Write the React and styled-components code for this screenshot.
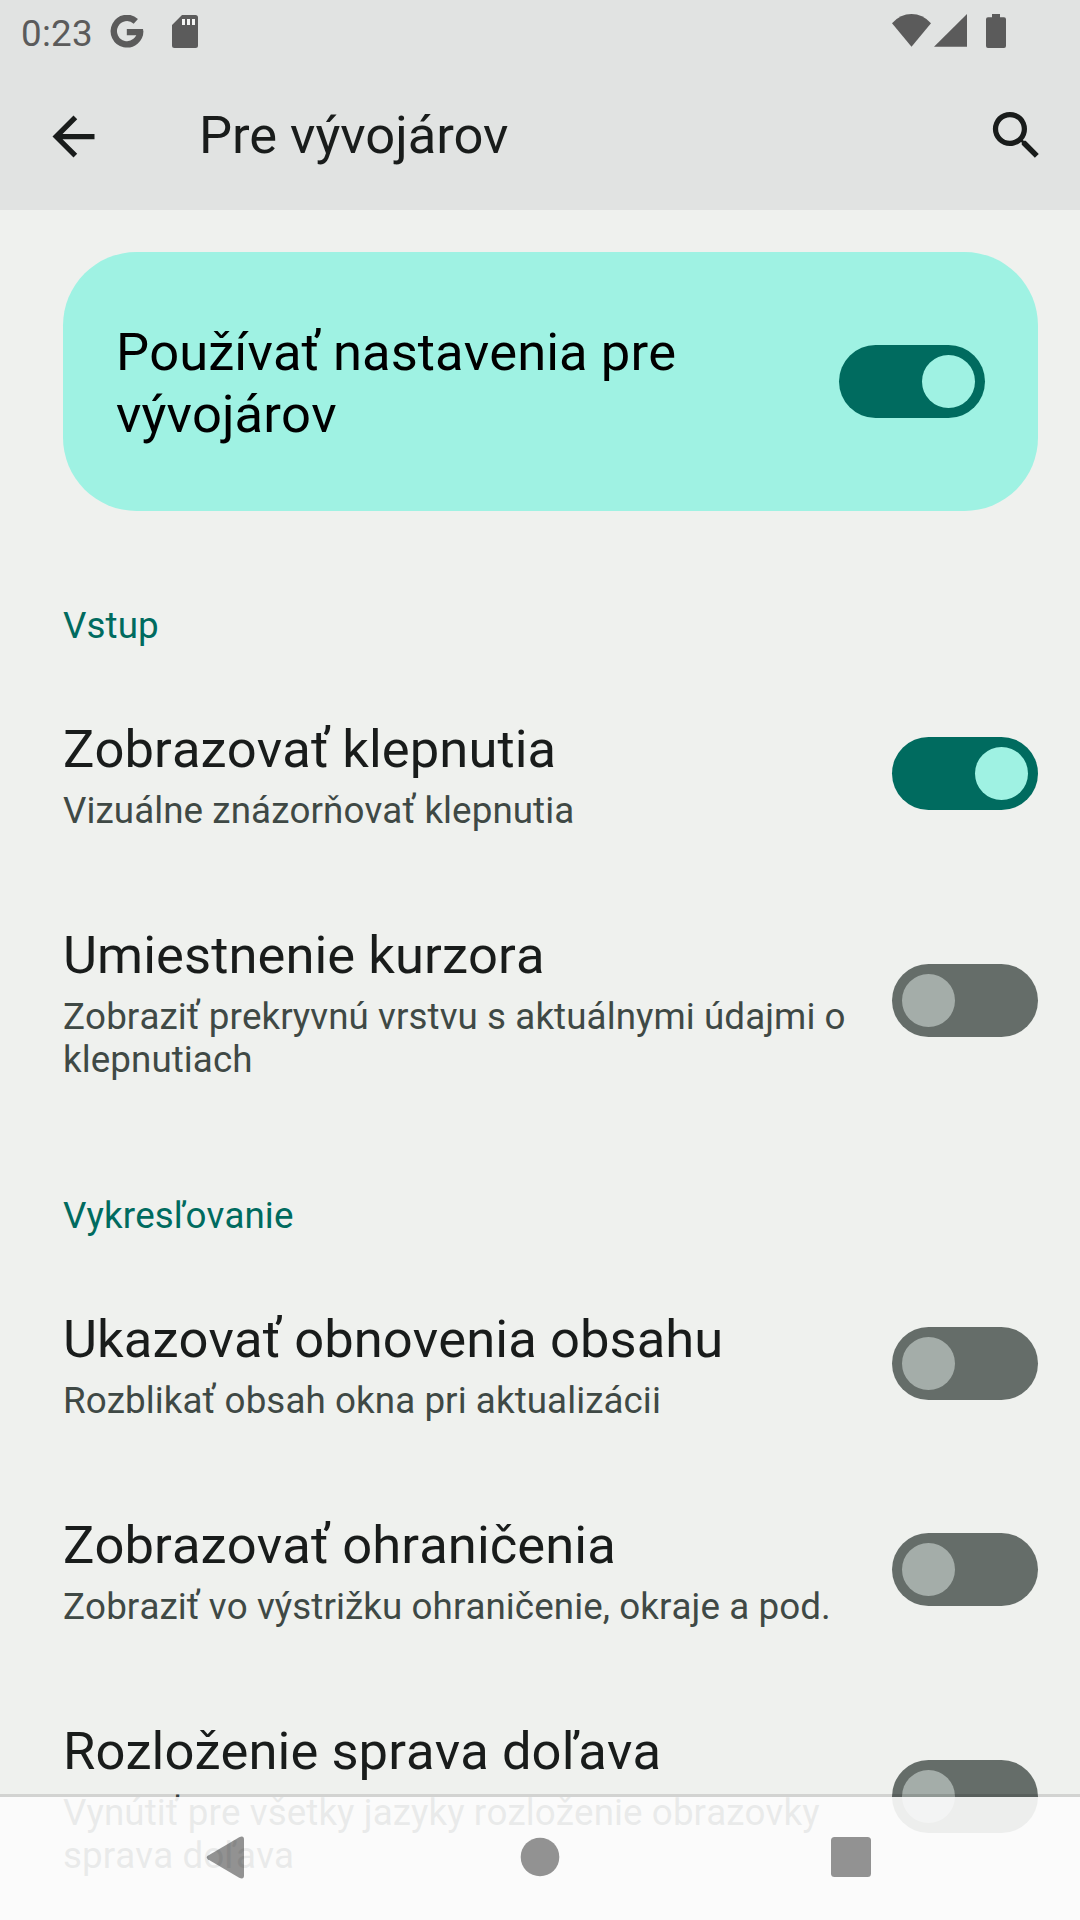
import React from "react";
import styled, { createGlobalStyle } from "styled-components";

const GlobalStyle = createGlobalStyle`
  *, *::before, *::after { box-sizing: border-box; }
  body {
    margin: 0;
    background: #eff1ee;
    font-family: Roboto, "Noto Sans", sans-serif;
    font-kerning: none;
    letter-spacing: 0.08px;
    color: #191c1b;
  }
`;

const Screen = styled.div`
  position: relative;
  width: 1080px;
  height: 1920px;
  overflow: hidden;
  background: #eff1ee;
`;

const TopArea = styled.header`
  height: 210px;
  background: #e1e3e2;
`;

const StatusBar = styled.div`
  display: flex;
  align-items: flex-start;
  justify-content: space-between;
  height: 63px;
  padding: 0 74px 0 21px;
  color: #5b5b5b;
`;

const StatusGroup = styled.div`
  display: flex;
  padding-top: ${(p) => p.$top || 0}px;
`;

const Clock = styled.span`
  width: 89px;
  padding-top: 12px;
  font-size: 36.75px;
  letter-spacing: 0.25px;
  line-height: 43px;
`;

const StatusIcon = styled.svg`
  display: block;
  flex: none;
  margin-top: ${(p) => p.$top || 0}px;
  margin-left: ${(p) => p.$left || 0}px;
`;

const AppBar = styled.div`
  display: flex;
  align-items: flex-start;
  height: 147px;
  padding: 41px 32px 0 42px;
`;

const IconButton = styled.button`
  display: block;
  flex: none;
  width: 63px;
  height: 63px;
  margin: ${(p) => p.$top || 0}px 0 0;
  padding: 0;
  border: 0;
  background: none;
  color: #191c1b;

  svg {
    display: block;
    width: 63px;
    height: 63px;
    fill: currentColor;
  }
`;

const PageTitle = styled.h1`
  flex: 1;
  margin: 0 0 0 94px;
  font-size: 52.5px;
  font-weight: 400;
  font-kerning: normal;
  letter-spacing: -0.05px;
  line-height: 62px;
`;

const MainSwitchCard = styled.section`
  display: flex;
  align-items: center;
  justify-content: space-between;
  width: 975px;
  height: 259px;
  margin: 42px 0 24px 63px;
  padding: 0 53px;
  border-radius: 73.5px;
  background: #9ff2e3;
  color: #000;
`;

const CardText = styled.div`
  width: 600px;
  padding-top: 3px;
  font-size: 52.5px;
  line-height: 62px;
`;

const Category = styled.h2`
  height: 135px;
  margin: 0;
  padding: 69px 63px 0;
  color: #006b5f;
  font-size: 36.75px;
  font-weight: 400;
  line-height: 43px;
`;

const Row = styled.div`
  display: flex;
  align-items: center;
  justify-content: space-between;
  padding: 0 42px 0 63px;
`;

const RowText = styled.div`
  width: 800px;
  padding: 48px 0 44px;
`;

const RowTitle = styled.div`
  font-size: 52.5px;
  line-height: 62px;
`;

const RowSummary = styled.div`
  margin-top: 9px;
  color: #3f4945;
  font-size: 36.75px;
  line-height: 43px;
`;

const Track = styled.span`
  display: flex;
  flex: none;
  justify-content: ${(p) => (p.$on ? "flex-end" : "flex-start")};
  width: 146px;
  height: 73px;
  padding: 10px;
  border-radius: 37px;
  background: ${(p) => (p.$on ? "#006b5f" : "#656d69")};
`;

const Thumb = styled.span`
  width: 53px;
  height: 53px;
  border-radius: 50%;
  background: ${(p) => (p.$on ? "#9ff2e3" : "#a4ada9")};
`;

const NavBar = styled.nav`
  position: absolute;
  right: 0;
  bottom: 0;
  left: 0;
  display: flex;
  justify-content: space-between;
  height: 126px;
  padding: 39px 208px 0 206px;
  border-top: 3px solid rgba(0, 0, 0, 0.12);
  background: rgba(252, 252, 252, 0.9);
  background-clip: padding-box;
`;

const NavIcon = styled.svg`
  display: block;
  width: 42px;
  height: 44px;
  fill: rgba(0, 0, 0, 0.42);
`;

function Switch({ on }) {
  return (
    <Track $on={on} role="switch" aria-checked={!!on}>
      <Thumb $on={on} />
    </Track>
  );
}

function Preference({ title, summary, on }) {
  return (
    <Row>
      <RowText>
        <RowTitle>{title}</RowTitle>
        <RowSummary>{summary}</RowSummary>
      </RowText>
      <Switch on={on} />
    </Row>
  );
}

const sections = [
  {
    name: "Vstup",
    items: [
      { title: "Zobrazovať klepnutia", summary: "Vizuálne znázorňovať klepnutia", on: true },
      { title: "Umiestnenie kurzora", summary: "Zobraziť prekryvnú vrstvu s aktuálnymi údajmi o klepnutiach" },
    ],
  },
  {
    name: "Vykresľovanie",
    items: [
      { title: "Ukazovať obnovenia obsahu", summary: "Rozblikať obsah okna pri aktualizácii" },
      { title: "Zobrazovať ohraničenia", summary: "Zobraziť vo výstrižku ohraničenie, okraje a pod." },
      { title: "Rozloženie sprava doľava", summary: "Vynútiť pre všetky jazyky rozloženie obrazovky sprava doľava" },
    ],
  },
];

export default function App() {
  return (
    <>
      <GlobalStyle />
      <Screen>
        <TopArea>
          <StatusBar>
            <StatusGroup>
              <Clock>0:23</Clock>
              <StatusIcon $top={15} width="34" height="33" viewBox="0 0 34 33">
                <path
                  d="M25.8 6.3A13.2 13.2 0 1 0 30.2 15.6"
                  fill="none"
                  stroke="currentColor"
                  strokeWidth="6.4"
                />
                <path d="M16.8 14H33.1L32.4 20.3H16.8Z" fill="currentColor" />
              </StatusIcon>
              <StatusIcon $top={15} $left={28} width="26" height="33" viewBox="0 0 26 33">
                <path
                  d="M10 0H23.5A2.5 2.5 0 0 1 26 2.5V30.5A2.5 2.5 0 0 1 23.5 33H2.5A2.5 2.5 0 0 1 0 30.5V10Z"
                  fill="currentColor"
                />
                <path d="M10 4h3v6h-3zM15 4h3v6h-3zM20 4h3v6h-3z" fill="#f4f5f4" />
              </StatusIcon>
            </StatusGroup>
            <StatusGroup $top={14}>
              <StatusIcon width="39" height="33" viewBox="0 0 39 33">
                <path d="M0 9.2Q8.4 0 19.5 0T39 9.2L19.5 32.8Z" fill="currentColor" />
              </StatusIcon>
              <StatusIcon $left={3} width="33" height="33" viewBox="0 0 33 33">
                <path d="M0 32.8L33 0V32.8Z" fill="currentColor" />
              </StatusIcon>
              <StatusIcon $left={19} width="20" height="34" viewBox="0 0 20 34">
                <path
                  d="M6 0H14V3.3H18A2 2 0 0 1 20 5.3V32A2 2 0 0 1 18 34H2A2 2 0 0 1 0 32V5.3A2 2 0 0 1 2 3.3H6Z"
                  fill="currentColor"
                />
              </StatusIcon>
            </StatusGroup>
          </StatusBar>
          <AppBar>
            <IconButton $top={1} aria-label="Späť">
              <svg viewBox="0 0 24 24">
                <path d="M20 11H7.83l5.59-5.59L12 4l-8 8 8 8 1.41-1.41L7.83 13H20v-2z" />
              </svg>
            </IconButton>
            <PageTitle>Pre vývojárov</PageTitle>
            <IconButton aria-label="Hľadať">
              <svg viewBox="0 0 24 24">
                <path d="M15.5 14h-.79l-.28-.27A6.471 6.471 0 0 0 16 9.5 6.5 6.5 0 1 0 9.5 16c1.61 0 3.09-.59 4.23-1.57l.27.28v.79l5 4.99L20.49 19l-4.99-5zm-6 0C7.01 14 5 11.99 5 9.5S7.01 5 9.5 5 14 7.01 14 9.5 11.99 14 9.5 14z" />
              </svg>
            </IconButton>
          </AppBar>
        </TopArea>
        <main>
          <MainSwitchCard>
            <CardText>Používať nastavenia pre vývojárov</CardText>
            <Switch on />
          </MainSwitchCard>
          {sections.map((section) => (
            <section key={section.name}>
              <Category>{section.name}</Category>
              {section.items.map((item) => (
                <Preference key={item.title} {...item} />
              ))}
            </section>
          ))}
        </main>
        <NavBar>
          <NavIcon viewBox="0 0 42 44">
            <path d="M1.8 19.8L33.2 1.2Q38 -0.8 38 3.5V39.5Q38 43.8 33.2 41.8L1.8 23.2Q-0.4 21.5 1.8 19.8Z" />
          </NavIcon>
          <NavIcon viewBox="0 0 42 44">
            <circle cx="22" cy="21" r="19.3" />
          </NavIcon>
          <NavIcon viewBox="0 0 42 44">
            <rect x="1" y="1" width="40" height="40" rx="3.5" />
          </NavIcon>
        </NavBar>
      </Screen>
    </>
  );
}
